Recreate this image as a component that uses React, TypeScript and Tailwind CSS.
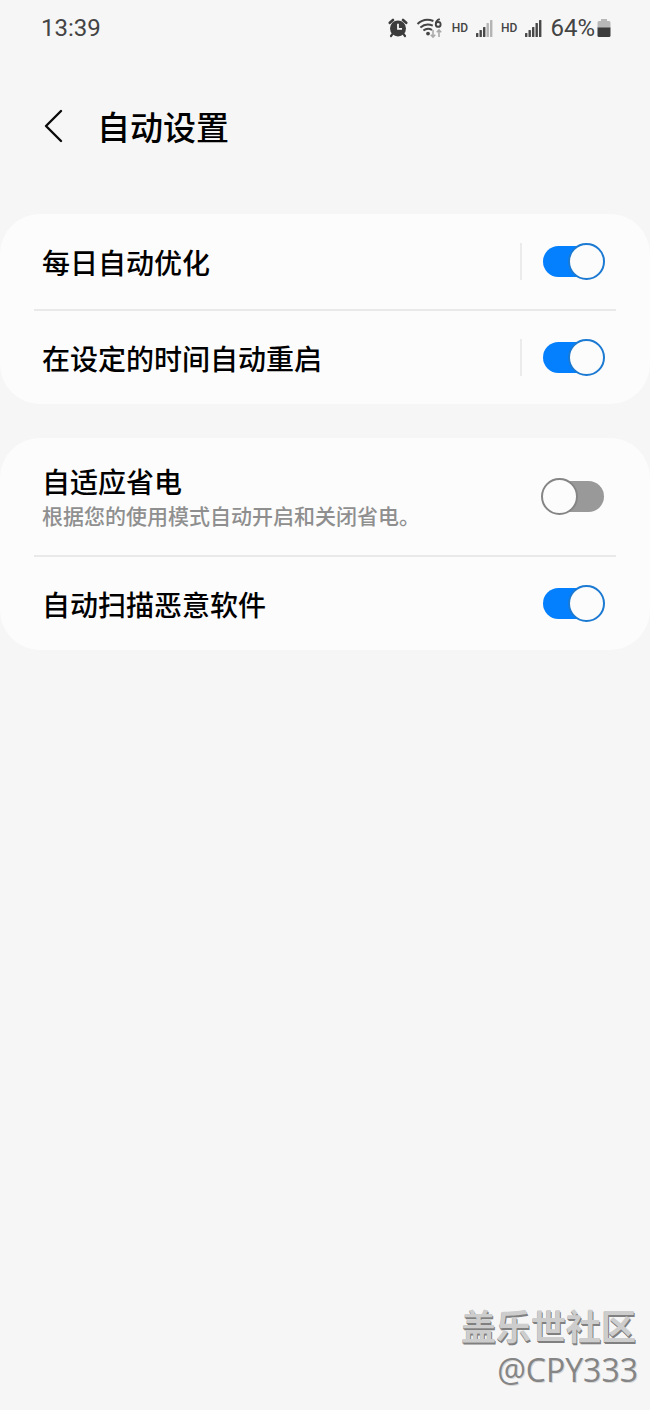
import { useState } from "react";

type Setting = {
  id: string;
  title: string;
  description?: string;
  split?: boolean;
  enabled: boolean;
};

const groups: Setting[][] = [
  [
    { id: "optimize", title: "每日自动优化", split: true, enabled: true },
    { id: "restart", title: "在设定的时间自动重启", split: true, enabled: true },
  ],
  [
    {
      id: "power",
      title: "自适应省电",
      description: "根据您的使用模式自动开启和关闭省电。",
      enabled: false,
    },
    { id: "malware", title: "自动扫描恶意软件", enabled: true },
  ],
];

function AlarmIcon() {
  return (
    <svg width="20" height="20" viewBox="0 0 20 20" aria-hidden="true">
      <path d="M1.800 4.800 5 2M18.200 4.800 15 2" stroke="#3c3c3c" strokeWidth="2.600" strokeLinecap="round" />
      <path d="M4.800 15.600 3 18M15.200 15.600 17 18" stroke="#3c3c3c" strokeWidth="2.200" strokeLinecap="round" />
      <circle cx="10" cy="10.400" r="8" fill="#3c3c3c" />
      <path d="M10 5.800v5h4" fill="none" stroke="#f6f6f6" strokeWidth="1.800" />
    </svg>
  );
}

function WifiIcon() {
  return (
    <svg width="28" height="22" viewBox="0 0 28 22" fill="none" aria-hidden="true">
      <path d="M1.500 7C6 2.600 12 1.800 17.400 4" stroke="#444" strokeWidth="2" />
      <path d="M4.400 10.400C8 7.200 12.400 6.600 16.800 8.600" stroke="#444" strokeWidth="2" />
      <path d="M7.400 13.600c2.600-2.200 5.800-2.400 8.600-.6" stroke="#444" strokeWidth="2" />
      <circle cx="12" cy="16.600" r="1.900" fill="#444" />
      <path d="M23.800 2.200C21 3 19.800 4.800 19.800 7.200" stroke="#444" strokeWidth="1.900" />
      <circle cx="22.200" cy="7.400" r="2.400" stroke="#444" strokeWidth="1.900" />
      <path d="M17 13v7M14.800 17.800 17 20l2.200-2.200" stroke="#aaa" strokeWidth="1.600" />
      <path d="M23 20v-7M20.800 15.200 23 13l2.200 2.200" stroke="#aaa" strokeWidth="1.600" />
    </svg>
  );
}

function SignalIcon({ level }: { level: number }) {
  return (
    <svg width="17" height="18" viewBox="0 0 17 18" aria-hidden="true">
      {[4, 7, 10, 14, 17].map((height, i) => (
        <rect
          key={height}
          x={i * 3.5}
          y={18 - height}
          width="2.4"
          height={height}
          rx="0.6"
          fill={i < level ? "#484848" : "#b4b4b4"}
        />
      ))}
    </svg>
  );
}

function BatteryIcon() {
  return (
    <svg width="14" height="20" viewBox="0 0 14 20" aria-hidden="true">
      <path d="M4 1h6v2h2a1.500 1.500 0 0 1 1.500 1.500V10H.5V4.500A1.500 1.500 0 0 1 2 3h2z" fill="#b8b8b8" />
      <path d="M.5 9.500h13v8A1.500 1.500 0 0 1 12 19H2a1.500 1.500 0 0 1-1.500-1.500z" fill="#3c3c3c" />
    </svg>
  );
}

function StatusBar() {
  return (
    <div className="flex h-14 items-center justify-between pr-[39px] pl-[41px] font-[Roboto,sans-serif] text-[#444]">
      <span className="text-2xl">13:39</span>
      <div className="flex items-center">
        <AlarmIcon />
        <span className="ml-2">
          <WifiIcon />
        </span>
        <span className="ml-2 text-xs font-medium">HD</span>
        <span className="ml-2">
          <SignalIcon level={3} />
        </span>
        <span className="ml-2 text-xs font-medium">HD</span>
        <span className="ml-2">
          <SignalIcon level={5} />
        </span>
        <span className="ml-2 text-2xl">64%</span>
        <span className="ml-0.5">
          <BatteryIcon />
        </span>
      </div>
    </div>
  );
}

function SettingRow({ setting }: { setting: Setting }) {
  const [checked, setChecked] = useState(setting.enabled);

  return (
    <li
      className={
        setting.description
          ? "flex h-[119px] items-center px-2"
          : "flex h-[97px] items-center px-2 last:h-[93px]"
      }
    >
      <label htmlFor={setting.id} className="flex-1 cursor-pointer">
        <span className="block text-[28px] leading-9 font-medium text-black">{setting.title}</span>
        {setting.description && (
          <span className="block text-[21px] leading-8 font-medium text-[#8f8f8f]">{setting.description}</span>
        )}
      </label>
      {setting.split && <span className="mr-[21px] h-[37px] w-0.5 bg-[#ebebeb]" />}
      <input
        id={setting.id}
        type="checkbox"
        role="switch"
        checked={checked}
        onChange={(e) => setChecked(e.target.checked)}
        className="relative mr-1 h-[31px] w-[61px] shrink-0 cursor-pointer appearance-none rounded-full bg-[#999] before:absolute before:-top-[3px] before:-left-0.5 before:size-[37px] before:rounded-full before:border-2 before:border-[#858585] before:bg-[#fcfcfc] checked:bg-[#0480fe] checked:before:left-[25px] checked:before:border-[#1c7ad2]"
      />
    </li>
  );
}

export default function App() {
  return (
    <div className="relative min-h-screen bg-[#f6f6f6] font-['Noto_Sans_CJK_SC',sans-serif]">
      <StatusBar />

      <header className="flex h-[158px] items-start pt-11 pl-11">
        <button type="button" aria-label="返回" className="mt-2 flex h-9 w-5 items-center">
          <svg width="19" height="34" viewBox="0 0 19 34" fill="none" aria-hidden="true">
            <path d="M17 2 2 17l15 15" stroke="#0a0a0a" strokeWidth="2.4" strokeLinecap="round" strokeLinejoin="round" />
          </svg>
        </button>
        <h1 className="ml-[33px] text-[33px] leading-[52px] font-medium text-black">自动设置</h1>
      </header>

      <main className="flex flex-col gap-[34px]">
        {groups.map((group) => (
          <ul key={group[0].id} className="divide-y-2 divide-[#e9e9e9] rounded-[40px] bg-[#fcfcfc] px-[34px]">
            {group.map((setting) => (
              <SettingRow key={setting.id} setting={setting} />
            ))}
          </ul>
        ))}
      </main>

      {/* Marca de la comunidad */}
      <div className="absolute right-3 bottom-5 text-right">
        <p className="pr-0.5 text-[35px] leading-[50px] font-bold text-[#cdcdcd] [text-shadow:0_1px_0_#808080,1px_2px_0_#808080]">
          盖乐世社区
        </p>
        <p className="font-['Open_Sans',sans-serif] text-[32px] leading-10 text-[#858585] [text-shadow:1px_1px_0_#d8d8d8]">
          @CPY333
        </p>
      </div>
    </div>
  );
}
